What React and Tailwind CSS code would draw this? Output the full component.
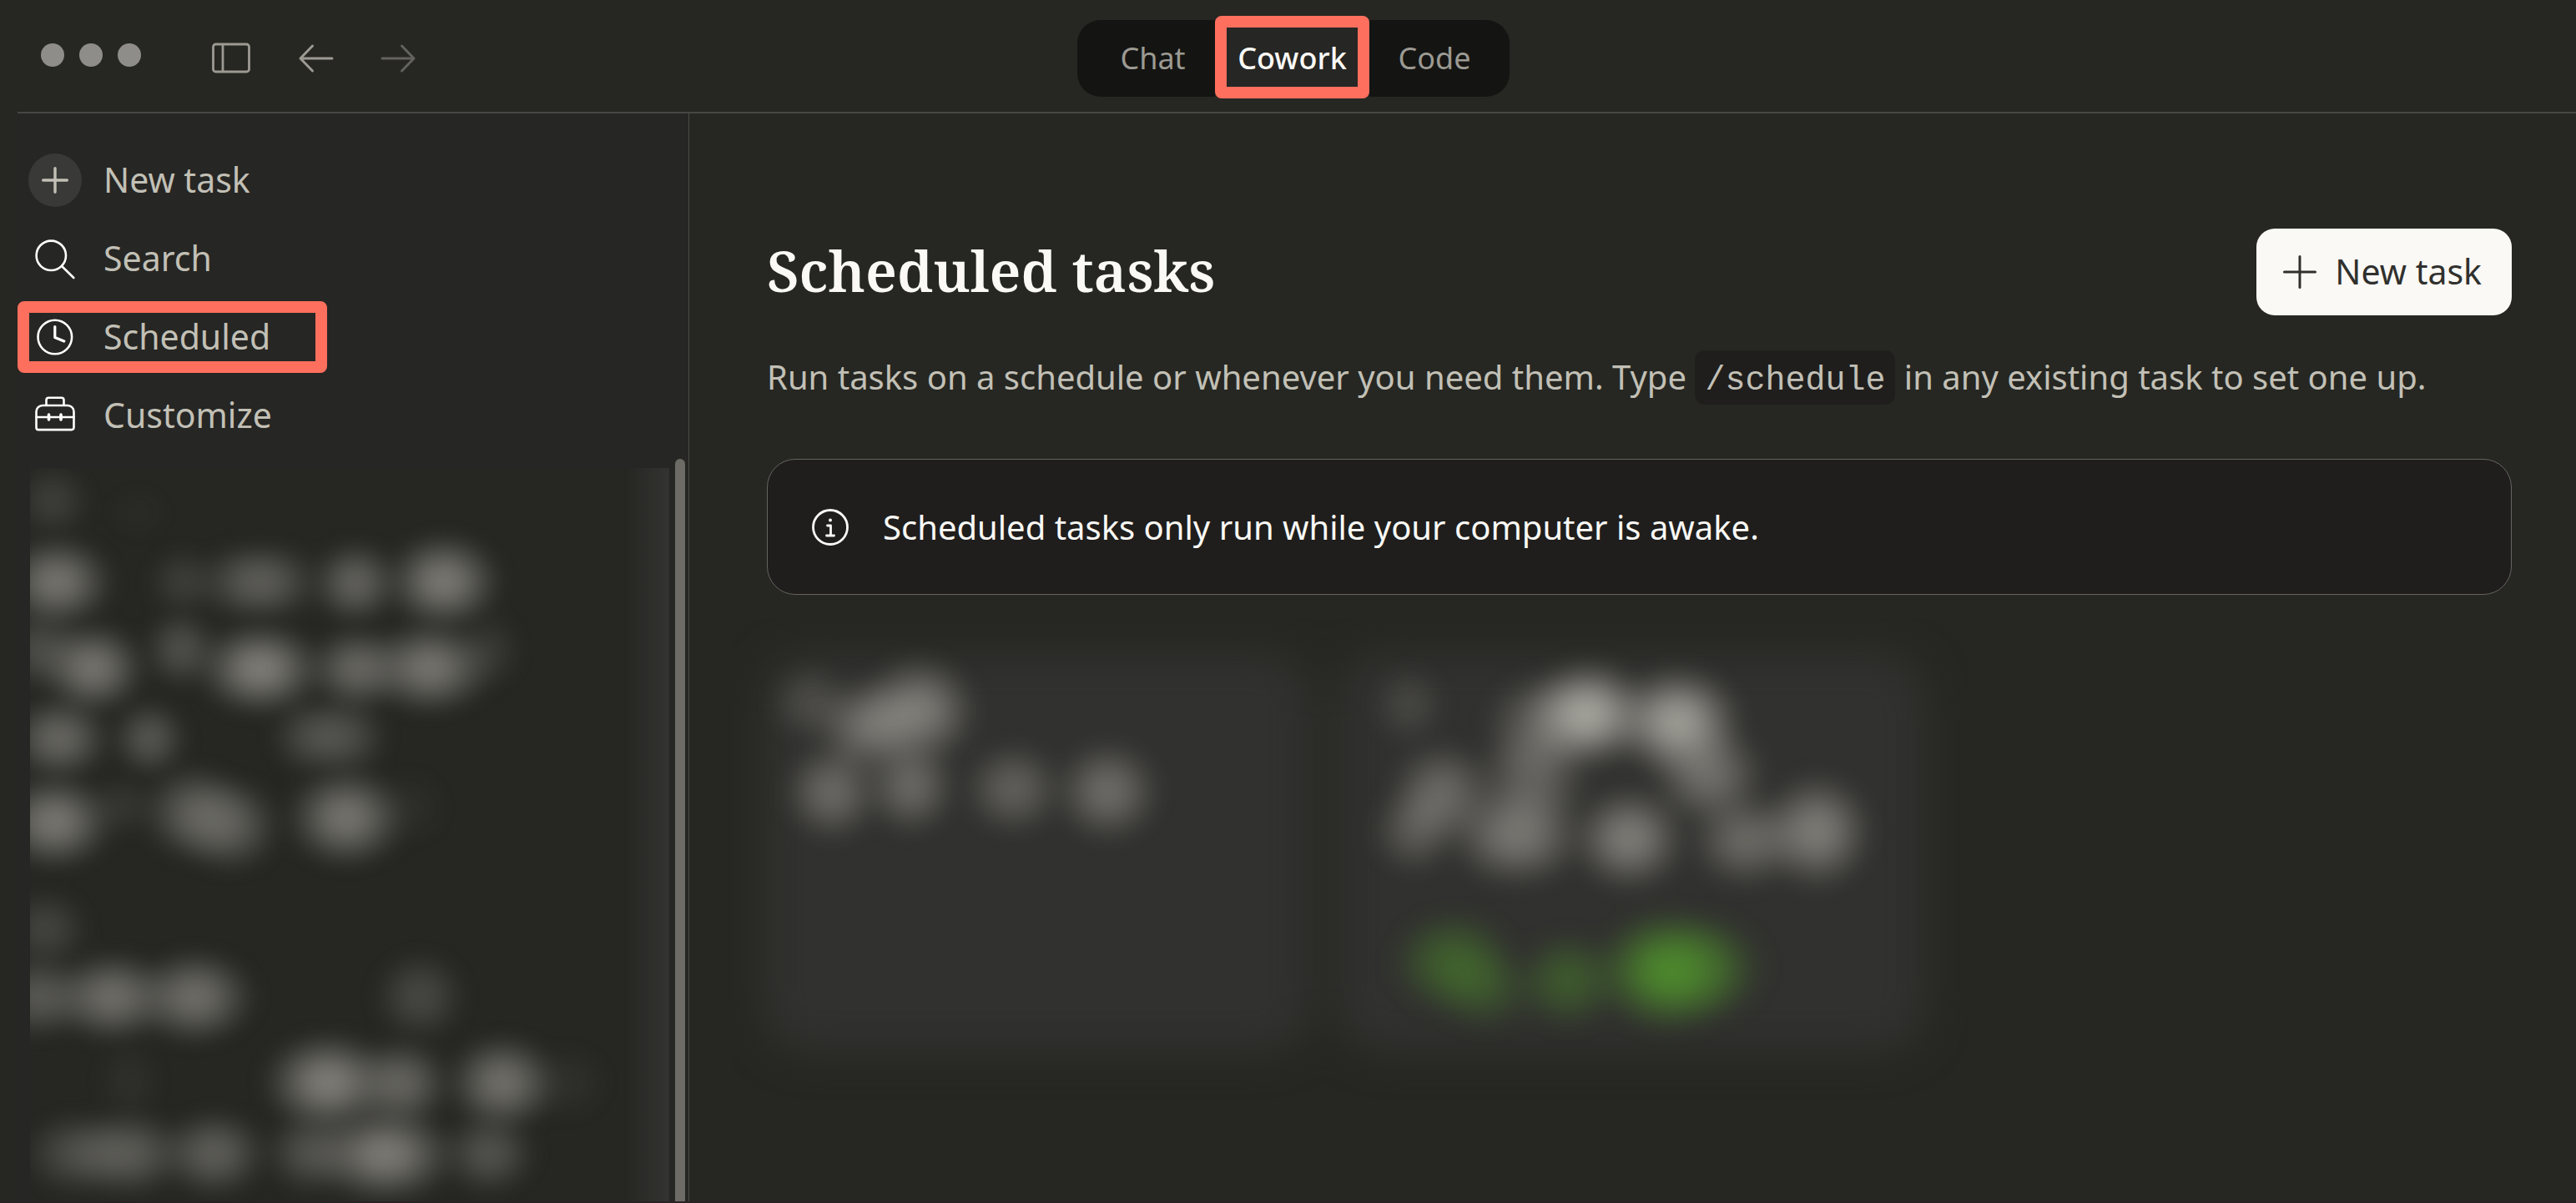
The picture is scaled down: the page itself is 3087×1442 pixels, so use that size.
import React from "react";

function PlusIcon({ className }) {
  return (
    <svg viewBox="0 0 40 40" className={className} fill="none" stroke="currentColor" strokeWidth="3" strokeLinecap="round">
      <path d="M20 1.5v37M1.5 20h37" />
    </svg>
  );
}

function LineIcon({ children }) {
  return (
    <svg viewBox="0 0 64 64" className="size-16 shrink-0 text-white" fill="none" stroke="currentColor" strokeWidth="2.6" strokeLinecap="round" strokeLinejoin="round">
      {children}
    </svg>
  );
}

const NAV = [
  {
    label: "New task",
    icon: (
      <span className="flex size-16 shrink-0 items-center justify-center rounded-full bg-[#393937]">
        <svg viewBox="0 0 32 32" className="size-8" fill="none" stroke="currentColor" strokeWidth="3.4" strokeLinecap="round">
          <path d="M16 1.7v28.6M1.7 16h28.6" />
        </svg>
      </span>
    ),
  },
  {
    label: "Search",
    icon: (
      <LineIcon>
        <circle cx="27.3" cy="28.3" r="17.7" />
        <path d="M40 41l14.3 14" />
      </LineIcon>
    ),
  },
  {
    label: "Scheduled",
    highlighted: true,
    icon: (
      <LineIcon>
        <circle cx="31.8" cy="32" r="20.3" />
        <path d="M31.8 19.5V32.4l11 4.6" strokeWidth="3.2" />
      </LineIcon>
    ),
  },
  {
    label: "Customize",
    icon: (
      <LineIcon>
        <path d="M17 20h30a7.5 7.5 0 0 1 7.5 7.5v19a2.6 2.6 0 0 1-2.6 2.6H12.1a2.6 2.6 0 0 1-2.6-2.6V27.5a7.5 7.5 0 0 1 7.5-7.5z" />
        <path d="M21.5 19.5v-6a2.8 2.8 0 0 1 2.8-2.8h15.4a2.8 2.8 0 0 1 2.8 2.8v6M9.5 34h45" />
        <path d="M24.5 31v6M39 31v6" strokeWidth="3.6" />
      </LineIcon>
    ),
  },
];

const HISTORY_BLOBS = [
  [115, 106, 95, 90, 0.26], [305, 130, 80, 70, 0.05],
  [125, 275, 140, 108, 0.85], [405, 275, 90, 85, 0.25], [540, 275, 120, 95, 0.42], [605, 275, 120, 95, 0.42], [785, 277, 110, 100, 0.65], [980, 274, 142, 114, 0.9],
  [90, 418, 115, 95, 0.42], [205, 455, 130, 108, 0.85], [400, 415, 95, 95, 0.45], [575, 456, 155, 110, 0.95], [790, 456, 125, 100, 0.7], [950, 454, 155, 110, 0.85], [1080, 418, 85, 95, 0.2],
  [130, 602, 128, 100, 0.7], [330, 602, 95, 92, 0.52], [690, 598, 105, 95, 0.4], [765, 598, 105, 98, 0.4],
  [120, 776, 145, 112, 0.88], [270, 742, 90, 78, 0.17], [430, 757, 130, 115, 0.6], [505, 783, 130, 114, 0.6], [765, 767, 148, 118, 0.85], [910, 745, 90, 95, 0.08],
  [100, 1000, 110, 96, 0.32],
  [85, 1142, 130, 100, 0.55], [248, 1142, 150, 108, 0.78], [430, 1142, 150, 112, 0.78], [928, 1140, 115, 108, 0.36],
  [285, 1317, 85, 105, 0.1], [725, 1320, 160, 118, 0.95], [885, 1323, 125, 108, 0.68], [1110, 1321, 138, 114, 0.8], [1255, 1321, 105, 95, 0.1],
  [165, 1468, 130, 100, 0.4], [280, 1468, 150, 104, 0.58], [472, 1468, 135, 104, 0.6], [690, 1466, 120, 100, 0.48], [850, 1470, 175, 114, 0.92], [1080, 1468, 118, 100, 0.48],
];

const CARD_BLOBS = [
  [98, 265, 60, 145, 0.2], [172, 340, 76, 175, 0.48], [235, 290, 84, 195, 0.56],
  [125, 545, 70, 175, 0.42], [225, 525, 66, 175, 0.42], [355, 535, 72, 165, 0.35], [475, 543, 76, 180, 0.44],
  [858, 272, 54, 145, 0.16], [1025, 340, 80, 190, 0.36], [1085, 300, 88, 190, 0.85], [1198, 325, 92, 195, 0.8],
  [900, 550, 76, 185, 0.42], [865, 665, 62, 160, 0.3], [1015, 500, 84, 190, 0.36], [1238, 490, 82, 185, 0.46],
  [995, 678, 98, 185, 0.52], [1137, 690, 82, 185, 0.56], [1285, 695, 80, 170, 0.42], [1375, 668, 80, 205, 0.56],
];

const STATUS_BLOBS = [
  [915, 1080, 90, 185, 0.48], [955, 1165, 76, 155, 0.28], [1060, 1135, 76, 175, 0.42], [1188, 1105, 104, 215, 0.9], [1240, 1095, 84, 190, 0.35],
];

function Glow({ id, color }) {
  return (
    <radialGradient id={id}>
      <stop offset="0" stopColor={color} stopOpacity="1" />
      <stop offset="0.2" stopColor={color} stopOpacity="0.94" />
      <stop offset="0.4" stopColor={color} stopOpacity="0.71" />
      <stop offset="0.6" stopColor={color} stopOpacity="0.4" />
      <stop offset="0.8" stopColor={color} stopOpacity="0.14" />
      <stop offset="0.9" stopColor={color} stopOpacity="0.05" />
      <stop offset="1" stopColor={color} stopOpacity="0" />
    </radialGradient>
  );
}

function Blobs({ items, fill }) {
  return items.map(([cx, cy, rx, ry, o], i) => (
    <ellipse key={i} cx={cx} cy={cy} rx={rx} ry={ry} opacity={o} fill={fill} />
  ));
}

function BlurredHistory() {
  return (
    <svg viewBox="66 37 1413 1531" preserveAspectRatio="none" className="h-[879px] w-full bg-[#262723]" aria-hidden="true">
      <defs>
        <Glow id="history-glow" color="#81807a" />
        <filter id="history-soft" filterUnits="userSpaceOnUse" x="-100" y="-100" width="1700" height="1800" colorInterpolationFilters="sRGB">
          <feGaussianBlur stdDeviation="18 14" />
        </filter>
        <linearGradient id="edge-fade">
          <stop offset="0" stopColor="#3a3a38" stopOpacity="0" />
          <stop offset="1" stopColor="#3a3a38" stopOpacity="0.7" />
        </linearGradient>
      </defs>
      <g filter="url(#history-soft)">
        <Blobs items={HISTORY_BLOBS} fill="url(#history-glow)" />
      </g>
      <rect x="1380" y="37" width="99" height="1531" fill="url(#edge-fade)" />
    </svg>
  );
}

function BlurredCards() {
  return (
    <svg viewBox="0 0 1568 1568" preserveAspectRatio="none" className="mt-7 -ml-10 h-[600px] w-[1480px] max-w-full" aria-hidden="true">
      <defs>
        <Glow id="card-glow" color="#b8b6ae" />
        <Glow id="status-glow" color="#50912d" />
        <filter id="card-soft" x="-20%" y="-20%" width="140%" height="140%" colorInterpolationFilters="sRGB">
          <feGaussianBlur stdDeviation="26 62" />
        </filter>
        <filter id="blob-soft" x="-20%" y="-20%" width="140%" height="140%" colorInterpolationFilters="sRGB">
          <feGaussianBlur stdDeviation="11 26" />
        </filter>
      </defs>
      <g filter="url(#card-soft)" fill="#31312f">
        <rect x="36" y="110" width="698" height="1250" rx="60" ry="150" />
        <rect x="766" y="110" width="748" height="1250" rx="60" ry="150" />
      </g>
      <g filter="url(#blob-soft)">
        <Blobs items={CARD_BLOBS} fill="url(#card-glow)" />
        <Blobs items={STATUS_BLOBS} fill="url(#status-glow)" />
      </g>
    </svg>
  );
}

function Header() {
  return (
    <header className="ml-[21px] flex h-[136px] items-center border-b-2 border-[#474744] pt-1.5 pr-2">
      <div className="flex flex-1 items-center pl-7">
        <div className="mb-2 flex gap-[18px]">
          <span className="size-7 rounded-full bg-[#8f8d89]" />
          <span className="size-7 rounded-full bg-[#8f8d89]" />
          <span className="size-7 rounded-full bg-[#8f8d89]" />
        </div>
        <div className="flex items-center pl-[84px] text-[#9c9a92]">
          <button type="button" aria-label="Toggle sidebar">
            <svg viewBox="0 0 48 38" className="h-[38px] w-12" fill="none" stroke="currentColor" strokeWidth="2.8">
              <rect x="2.5" y="2" width="43" height="33" rx="3" />
              <path d="M14 2v33" />
            </svg>
          </button>
          <button type="button" aria-label="Back" className="ml-14">
            <svg viewBox="0 0 44 38" className="h-[38px] w-11" fill="none" stroke="currentColor" strokeWidth="3" strokeLinecap="round" strokeLinejoin="round">
              <path d="M41 19H3M17.500 4L3 19l14.500 15" />
            </svg>
          </button>
          <button type="button" aria-label="Forward" className="ml-[54px] text-[#63625d]">
            <svg viewBox="0 0 44 38" className="h-[38px] w-11" fill="none" stroke="currentColor" strokeWidth="3" strokeLinecap="round" strokeLinejoin="round">
              <path d="M3 19h38M26.500 4L41 19 26.500 34" />
            </svg>
          </button>
        </div>
      </div>
      <nav aria-label="Mode" className="flex h-[92px] items-center rounded-[28px] bg-[#141413] text-4xl font-[450] text-[#9c9a92]">
        <button type="button" className="w-[165px] pl-4">Chat</button>
        <button type="button" className="relative h-[92px] w-[185px] bg-[#262624] font-medium text-[#faf9f5]">
          Cowork
          <span className="absolute inset-x-0 -top-[5px] -bottom-0.5 rounded-lg border-14 border-[#ff6f5e]" />
        </button>
        <button type="button" className="w-[168px] pr-3">Code</button>
      </nav>
      <div className="flex-1 pr-7" />
    </header>
  );
}

function Sidebar() {
  return (
    <aside className="ml-[21px] flex w-[805px] shrink-0 flex-col border-r border-[#4a4a47] bg-[#262624] pt-[37px]">
      <nav aria-label="Main" className="flex flex-col gap-2">
        {NAV.map(({ label, icon, highlighted }) => (
          <button key={label} type="button" className="relative flex h-[86px] w-[371px] items-center gap-[26px] pl-[13px] text-[41px] text-[#c2c0b6]">
            {icon}
            {label}
            {highlighted && <span className="absolute inset-0 rounded-lg border-14 border-[#ff6f5e]" />}
          </button>
        ))}
      </nav>
      <div className="mt-[9px] flex flex-1 pr-1 pl-[15px]">
        <div className="flex-1 pt-[11px]">
          <BlurredHistory />
        </div>
        <div className="ml-[7px] w-3 rounded-t-full bg-[#6c6b65]" />
      </div>
    </aside>
  );
}

export default function App() {
  return (
    <div className="flex min-h-screen flex-col border-b-2 border-[#2a2126] bg-[#262722] font-['Noto_Sans',sans-serif]">
      <Header />
      <div className="flex flex-1">
        <Sidebar />
        <main className="min-w-0 flex-1 pt-[138px] pr-[77px] pl-[93px]">
          <div className="flex h-[104px] items-start justify-between">
            <h1 className="font-['Noto_Serif','Liberation_Serif',serif] text-[68px] leading-[100px] font-semibold text-[#faf9f5]">Scheduled tasks</h1>
            <button type="button" className="flex h-[104px] items-center gap-[22px] rounded-[22px] bg-[#faf9f5] pr-9 pl-8 text-[41px] font-[450] text-[#30302e]">
              <PlusIcon className="size-10" />
              New task
            </button>
          </div>
          <p className="mt-[42px] text-[40px] leading-[64px] text-[#c2c0b6]">
            Run tasks on a schedule or whenever you need them. Type{" "}
            <code className="rounded-xl bg-[#1f1e1d] px-3 pt-3.5 pb-1.5 font-['Liberation_Mono',monospace] leading-none">/schedule</code>{" "}
            in any existing task to set one up.
          </p>
          <div role="note" className="mt-[66px] flex h-[163px] items-center gap-10 rounded-[34px] border border-[#656460] bg-[#1f1e1d] pl-[52px] text-[40px] text-[#faf9f5]">
            <svg viewBox="0 0 46 46" className="size-[46px] shrink-0" fill="none" stroke="currentColor" strokeWidth="2.8" strokeLinecap="round" strokeLinejoin="round">
              <circle cx="23" cy="23" r="20.5" />
              <path d="M19.500 21h4v12M18.500 33h9" />
              <circle cx="23" cy="14.5" r="2" fill="currentColor" stroke="none" />
            </svg>
            Scheduled tasks only run while your computer is awake.
          </div>
          <BlurredCards />
        </main>
      </div>
    </div>
  );
}
